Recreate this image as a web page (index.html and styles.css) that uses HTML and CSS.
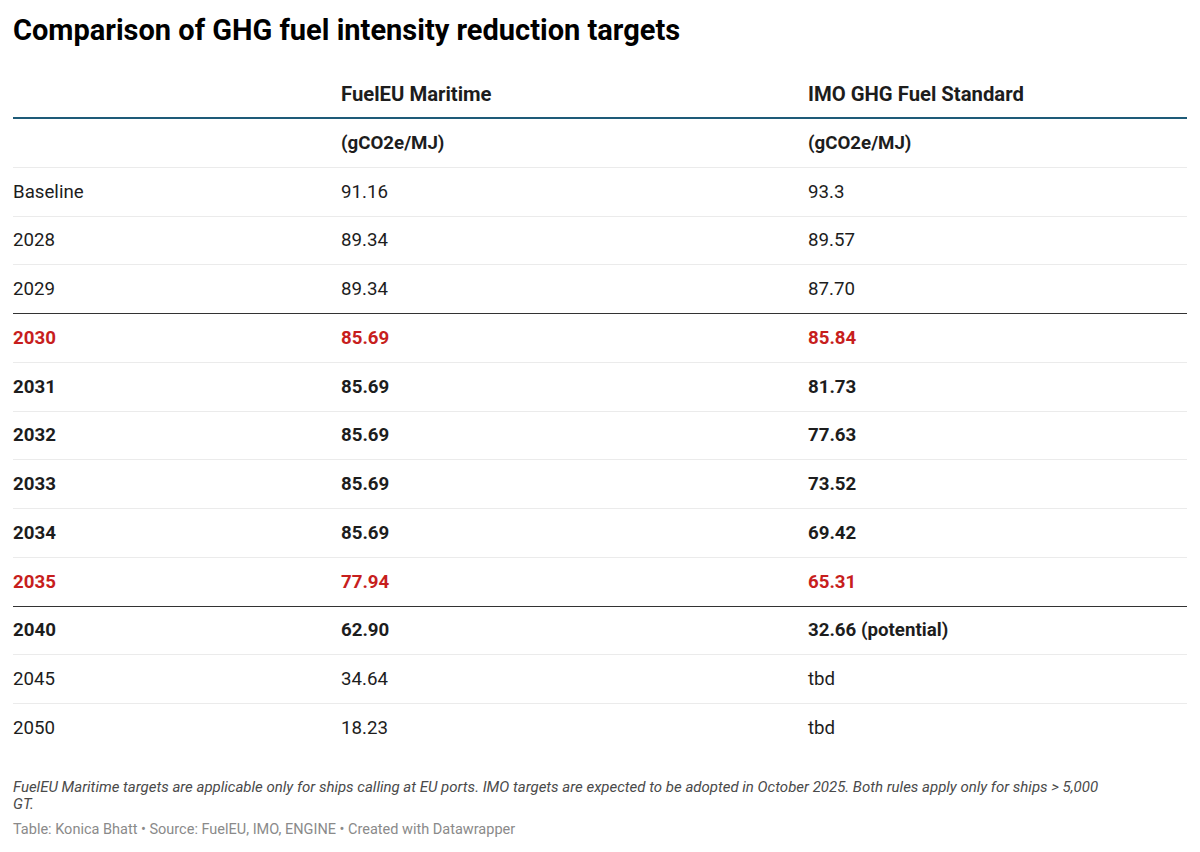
FILE: index.html
```html
<!DOCTYPE html>
<html lang="en">
<head>
<meta charset="utf-8">
<title>Comparison of GHG fuel intensity reduction targets</title>
<link rel="stylesheet" href="styles.css">
</head>
<body>
<div class="chart">
  <h1 class="title">Comparison of GHG fuel intensity reduction targets</h1>
  <div class="table">
    <div class="row head"><div></div><div>FuelEU Maritime</div><div>IMO GHG Fuel Standard</div></div>
    <div class="row bold"><div></div><div>(gCO2e/MJ)</div><div>(gCO2e/MJ)</div></div>
    <div class="row"><div>Baseline</div><div>91.16</div><div>93.3</div></div>
    <div class="row"><div>2028</div><div>89.34</div><div>89.57</div></div>
    <div class="row dark"><div>2029</div><div>89.34</div><div>87.70</div></div>
    <div class="row bold red"><div>2030</div><div>85.69</div><div>85.84</div></div>
    <div class="row bold"><div>2031</div><div>85.69</div><div>81.73</div></div>
    <div class="row bold"><div>2032</div><div>85.69</div><div>77.63</div></div>
    <div class="row bold"><div>2033</div><div>85.69</div><div>73.52</div></div>
    <div class="row bold"><div>2034</div><div>85.69</div><div>69.42</div></div>
    <div class="row bold red dark"><div>2035</div><div>77.94</div><div>65.31</div></div>
    <div class="row bold"><div>2040</div><div>62.90</div><div>32.66 (potential)</div></div>
    <div class="row"><div>2045</div><div>34.64</div><div>tbd</div></div>
    <div class="row last"><div>2050</div><div>18.23</div><div>tbd</div></div>
  </div>
  <p class="notes">FuelEU Maritime targets are applicable only for ships calling at EU ports. IMO targets are expected to be adopted in October 2025. Both rules apply only for ships &gt;&nbsp;5,000 GT.</p>
  <p class="byline">Table: Konica Bhatt • Source: FuelEU, IMO, ENGINE • Created with Datawrapper</p>
</div>
</body>
</html>
```

FILE: styles.css
```css
* { box-sizing: border-box; }
html, body { margin: 0; padding: 0; background: #ffffff; }
body {
  font-family: Roboto, "Liberation Sans", sans-serif;
  color: #1d1d1d;
}
.chart {
  padding: 14px 13px 0 13px;
  width: 1200px;
}
.title {
  margin: 0;
  font-size: 29px;
  line-height: 32px;
  font-weight: 700;
  color: #000;
}
.table {
  margin-top: 23.5px;
}
.row {
  display: grid;
  grid-template-columns: 328px 467px 1fr;
  align-items: center;
  height: 48.75px;
  border-bottom: 1px solid #ebebeb;
  font-size: 18.7px;
}
.row.head {
  height: 49.5px;
  border-bottom: 2.5px solid #1e5b78;
  font-weight: 700;
  font-size: 20.3px;
  padding-top: 1px;
}
.row.bold { font-weight: 700; }
.row.red { color: #c71e1d; }
.row.dark { border-bottom: 1.5px solid #333333; }
.row.last { border-bottom: none; }
.notes {
  margin: 26px 0 0 0;
  max-width: 1100px;
  font-size: 15px;
  line-height: 17px;
  font-style: italic;
  color: #4a4a4a;
}
.byline {
  margin: 8px 0 0 0;
  font-size: 14.5px;
  line-height: 18px;
  color: #8a8a8a;
}
```
